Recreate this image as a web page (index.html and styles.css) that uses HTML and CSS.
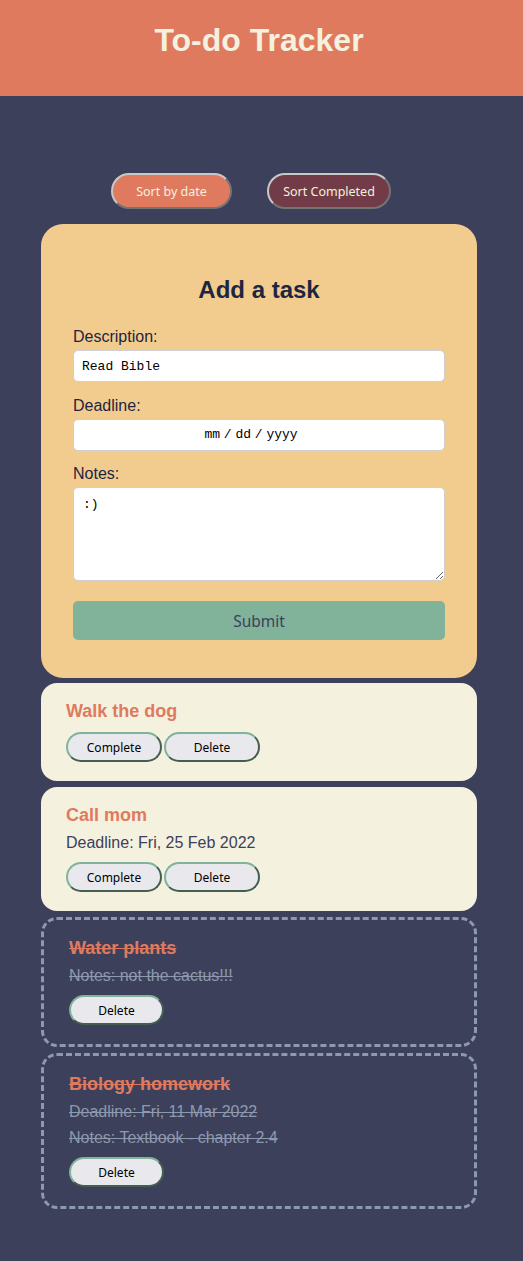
FILE: index.html
```html
<!DOCTYPE html>
<html lang="en">
<head>
<meta charset="utf-8">
<title>To-do Tracker</title>
<link rel="stylesheet" href="styles.css">
</head>
<body>
<header class="site-header">
  <h1 class="site-title">To-do Tracker</h1>
</header>
<main class="app">
  <div class="sort-bar">
    <button class="sort-btn sort-date">Sort by date</button>
    <button class="sort-btn sort-completed">Sort Completed</button>
  </div>

  <form class="task-form">
    <h2 class="form-title">Add a task</h2>
    <div class="field">
      <label class="field-label" for="desc">Description:</label>
      <input class="field-input" id="desc" type="text" value="Read Bible">
    </div>
    <div class="field">
      <label class="field-label" for="deadline">Deadline:</label>
      <input class="field-input date-input" id="deadline" type="text" value="mm / dd / yyyy">
    </div>
    <div class="field">
      <label class="field-label" for="notes">Notes:</label>
      <textarea class="field-input notes-input" id="notes">:)</textarea>
    </div>
    <button type="button" class="submit-btn">Submit</button>
  </form>

  <ul class="task-list">
    <li class="task">
      <h3 class="task-title">Walk the dog</h3>
      <div class="task-actions">
        <button class="task-btn">Complete</button>
        <button class="task-btn">Delete</button>
      </div>
    </li>
    <li class="task">
      <h3 class="task-title">Call mom</h3>
      <p class="task-meta">Deadline: Fri, 25 Feb 2022</p>
      <div class="task-actions">
        <button class="task-btn">Complete</button>
        <button class="task-btn">Delete</button>
      </div>
    </li>
    <li class="task task-done">
      <h3 class="task-title">Water plants</h3>
      <p class="task-meta">Notes: not the cactus!!!</p>
      <div class="task-actions">
        <button class="task-btn task-btn-sm">Delete</button>
      </div>
    </li>
    <li class="task task-done">
      <h3 class="task-title">Biology homework</h3>
      <p class="task-meta">Deadline: Fri, 11 Mar 2022</p>
      <p class="task-meta">Notes: Textbook - chapter 2.4</p>
      <div class="task-actions">
        <button class="task-btn task-btn-sm">Delete</button>
      </div>
    </li>
  </ul>
</main>
</body>
</html>
```

FILE: styles.css
```css
* { box-sizing: border-box; }

html, body {
  margin: 0;
  padding: 0;
  background: #3d405b;
  font-family: "Liberation Sans", Arial, sans-serif;
}

.site-header {
  background: #e07a5f;
  height: 96px;
  padding: 22px 5px 0 0;
}

.site-title {
  margin: 0;
  text-align: center;
  font-size: 32px;
  font-weight: bold;
  color: #f4f1de;
}

.app {
  width: 436px;
  margin: 0 0 0 41px;
  padding-bottom: 54px;
}

.sort-bar {
  display: flex;
  justify-content: center;
  gap: 35px;
  margin-top: 77px;
  padding-right: 16px;
  height: 36px;
}

.sort-btn {
  height: 36px;
  border: 2px outset #c8c8c8;
  border-radius: 18px;
  color: #f4f1de;
  font-family: "Noto Sans", sans-serif;
  font-size: 12.5px;
  padding: 0;
}

.sort-date { width: 121px; background: #e07a5f; }
.sort-completed { width: 124px; background: #713c48; }

.task-form {
  margin-top: 15px;
  background: #f2cc8f;
  border-radius: 22px;
  padding: 32px 32px 38px;
}

.form-title {
  margin: 20px 0 24px;
  text-align: center;
  font-size: 24px;
  font-weight: bold;
  color: #1d2541;
}

.field { margin-bottom: 14.5px; }
.field:nth-of-type(3) { margin-bottom: 20px; }

.field-label {
  display: block;
  font-size: 16px;
  color: #1d2541;
  margin-bottom: 4px;
}

.field-input {
  display: block;
  width: 100%;
  height: 32px;
  border: 1px solid #cfcfcf;
  border-radius: 5px;
  background: #fff;
  padding: 0 8px;
  font-family: "Liberation Mono", "Courier New", monospace;
  font-size: 13px;
  color: #000;
}

.date-input {
  text-align: center;
  word-spacing: -4px;
  padding-right: 24px;
}

.notes-input {
  height: 94px;
  padding: 9px 9px;
  resize: both;
}

.submit-btn {
  display: block;
  width: 100%;
  height: 39px;
  border: none;
  border-radius: 5px;
  background: #81b29a;
  color: #3d405b;
  font-family: "Noto Sans", sans-serif;
  font-size: 15.5px;
}

.task-list {
  list-style: none;
  margin: 5px 0 0;
  padding: 0;
  display: flex;
  flex-direction: column;
  gap: 6px;
}

.task {
  background: #f4f1de;
  border-radius: 16px;
  padding: 18px 25px 19px;
}

.task-done {
  background: transparent;
  border: 3px dashed #8d99ae;
  padding: 18px 25px 19px;
}

.task-title {
  margin: 0;
  font-size: 18px;
  font-weight: bold;
  color: #e07a5f;
}

.task-meta {
  margin: 8px 0 0;
  font-size: 16px;
  color: #3d405b;
}

.task-done .task-title,
.task-done .task-meta { text-decoration: line-through; }

.task-done .task-meta { color: #8d99ae; }

.task-actions {
  display: flex;
  gap: 2px;
  margin-top: 10px;
}

.task-btn {
  width: 96px;
  height: 30px;
  border: 2px outset #81b29a;
  border-radius: 15px;
  background: #e8e8ed;
  color: #000;
  font-family: "Noto Sans", sans-serif;
  font-size: 12px;
  padding: 0;
}

.task-btn-sm { width: 95px; }
```
